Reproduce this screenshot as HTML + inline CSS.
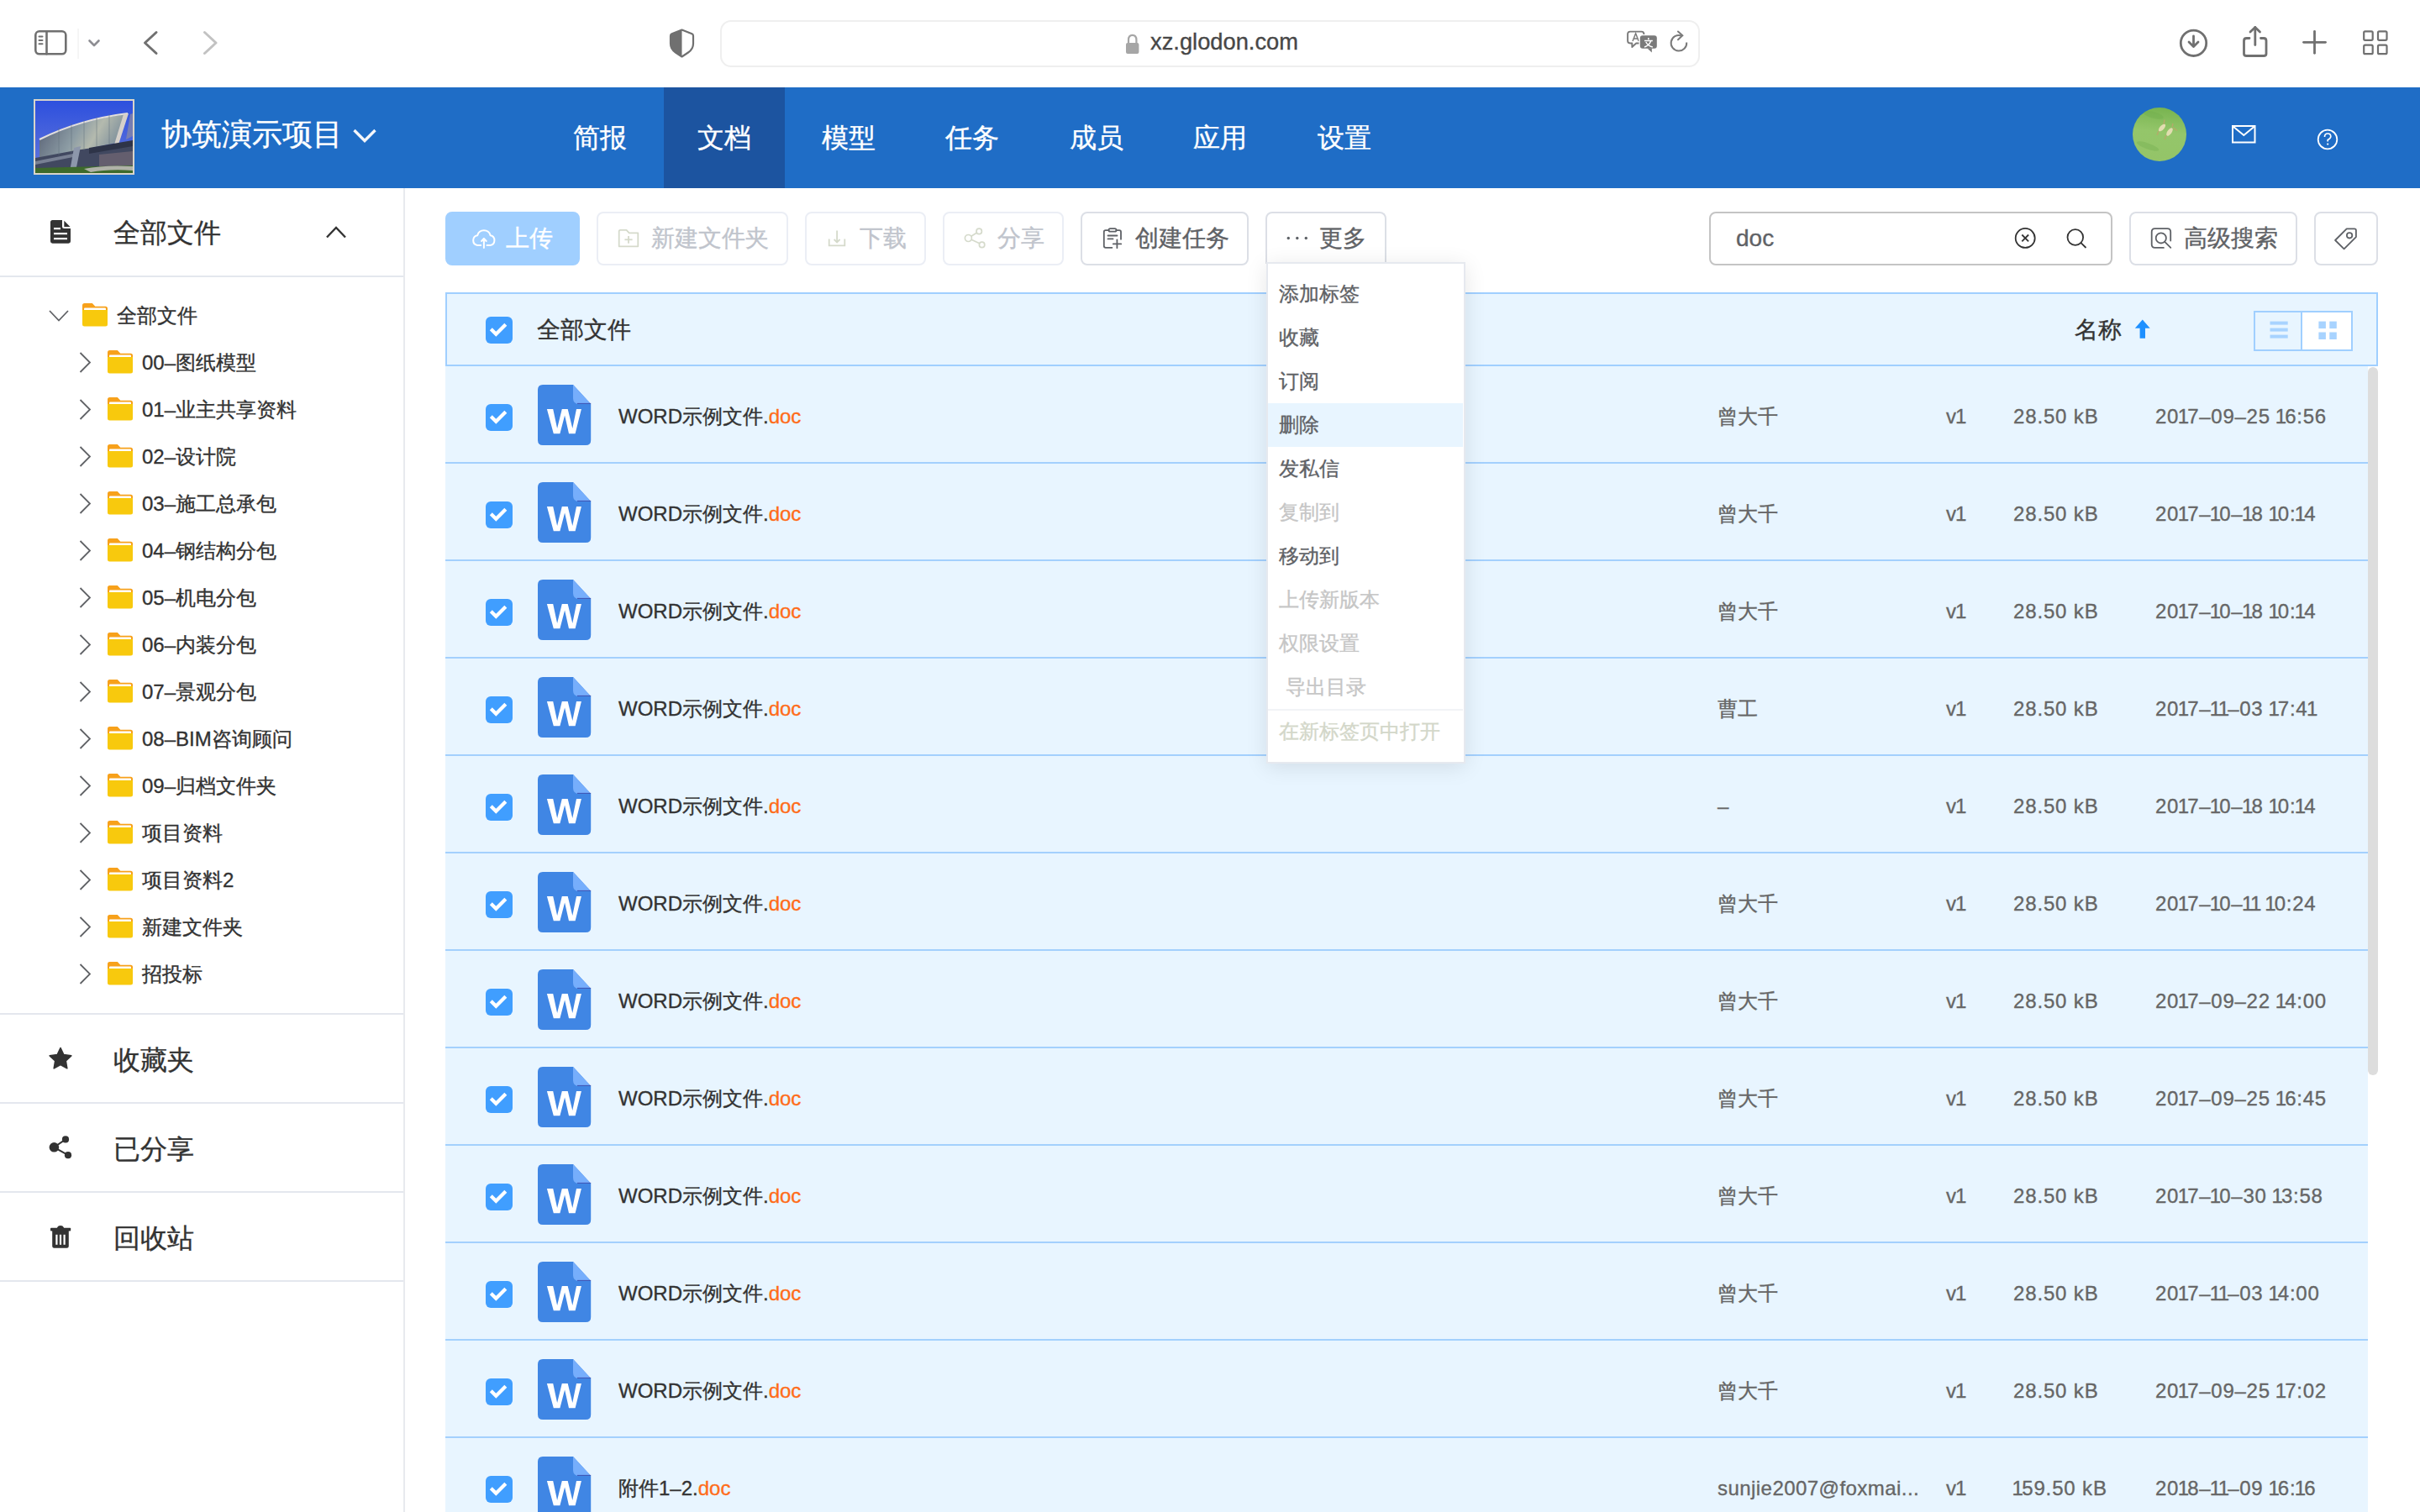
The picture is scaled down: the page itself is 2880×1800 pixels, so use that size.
<!DOCTYPE html>
<html><head><meta charset="utf-8"><style>
*{box-sizing:border-box;margin:0;padding:0}
html,body{width:2880px;height:1800px;overflow:hidden;background:#fff;font-family:"Liberation Sans",sans-serif;}
div{-webkit-text-stroke:0.35px currentColor}
.a{position:absolute}
.t{position:absolute;white-space:nowrap;line-height:1}
svg{position:absolute;overflow:visible}
.nav{position:absolute;top:104px;height:120px;width:144px;color:#fff;font-size:32px;line-height:120px;text-align:center}
.sep{position:absolute;left:0;width:480px;height:2px;background:#e4e7ee}
.tr{position:absolute;font-size:24px;color:#333;line-height:1;white-space:nowrap}
.btn{position:absolute;top:252px;height:64px;border:2px solid #ebeef5;border-radius:8px;background:#fff}
.bt{position:absolute;font-size:28px;line-height:1;white-space:nowrap;color:#c0c4cc}
.row{position:absolute;left:530px;width:2288px;height:116px;background:#e8f5ff;border-bottom:2px solid #a3d0fd}
.nm{position:absolute;left:206px;top:48px;font-size:24px;color:#333;line-height:1;white-space:nowrap}
.nm span{color:#ff6c1a}
.cl{position:absolute;top:48px;font-size:24px;color:#666;line-height:1;white-space:nowrap}
.di{position:absolute;left:14px;font-size:24px;color:#606266;line-height:1;white-space:nowrap}
.ds{color:#c6c6c6}
</style></head><body>
<div class="a" style="left:857px;top:24px;width:1166px;height:56px;border:2px solid #efefef;border-radius:13px;background:#fff"></div>
<div class="t" style="left:1369px;top:35.5px;font-size:27.3px;color:#474747">xz.glodon.com</div>
<svg width="2880" height="104" style="left:0;top:0">
<g fill="none" stroke="#707070" stroke-width="2.6" stroke-linecap="round" stroke-linejoin="round">
<rect x="42.3" y="37.3" width="36" height="27" rx="4.5"/>
<line x1="55.5" y1="37.3" x2="55.5" y2="64.3"/>
<line x1="46.5" y1="43.6" x2="50.5" y2="43.6" stroke-width="2"/>
<line x1="46.5" y1="48" x2="50.5" y2="48" stroke-width="2"/>
<line x1="46.5" y1="52.3" x2="50.5" y2="52.3" stroke-width="2"/>
<polyline points="186,38.5 172.5,51 186,63.5" stroke-width="3"/>
<polyline points="243.5,38.5 257,51 243.5,63.5" stroke="#c2c2c2" stroke-width="3"/>
<polyline points="106.5,48.5 112,54 117.5,48.5" stroke="#8e8e93" stroke-width="2.6"/>
</g>
<line x1="93" y1="34" x2="93" y2="70" stroke="#ececec" stroke-width="1"/>
<!-- shield -->
<path d="M811.5,35.5 L823.5,40.3 Q825,41 825,42.8 V52 Q825,58.5 819,62.5 L811.5,67.5 L804,62.5 Q798,58.5 798,52 V42.8 Q798,41 799.5,40.3 Z" fill="none" stroke="#707070" stroke-width="2.2" stroke-linejoin="round"/>
<path d="M811.5,35.5 L799.5,40.3 Q798,41 798,42.8 V52 Q798,58.5 804,62.5 L811.5,67.5 Z" fill="#707070"/>
<!-- lock -->
<path d="M1343,52 V47.5 Q1343,41.8 1347.7,41.8 Q1352.4,41.8 1352.4,47.5 V52" fill="none" stroke="#a6a6a6" stroke-width="2.2"/>
<rect x="1340" y="51" width="15.4" height="13" rx="2" fill="#a6a6a6"/>
<!-- translate -->
<path d="M1940,37.6 H1953.5 Q1956.4,37.6 1956.4,40.5 V48.6 Q1956.4,51.5 1953.5,51.5 H1947.2 L1942.3,56 V51.5 H1940 Q1937.1,51.5 1937.1,48.6 V40.5 Q1937.1,37.6 1940,37.6 Z" fill="none" stroke="#7a7a7a" stroke-width="1.9" stroke-linejoin="round"/>
<path d="M1943,49 L1946.6,39.8 L1950.2,49 M1944.2,46 H1949" fill="none" stroke="#7a7a7a" stroke-width="1.5"/>
<rect x="1950.5" y="41" width="22.5" height="18" rx="4" fill="#fff"/>
<rect x="1951.8" y="42.2" width="20" height="15.6" rx="3" fill="#7a7a7a"/>
<path d="M1960.5,57.5 L1965.8,62.5 V57.5 Z" fill="#7a7a7a"/>
<path d="M1957,48.6 H1966.8 M1961.8,45 V47.2 M1964.8,48.6 Q1962.5,54.5 1957,56 M1958.8,50 Q1961,54.5 1966.8,56" fill="none" stroke="#fff" stroke-width="1.5"/>
<!-- reload -->
<path d="M2007.2,50.5 A9.3,9.3 0 1 1 2001,42.5" fill="none" stroke="#7a7a7a" stroke-width="2"/>
<polyline points="1997,37.5 2002.3,42.3 1997,47.2" fill="none" stroke="#7a7a7a" stroke-width="2" stroke-linecap="round"/>
<!-- right icons -->
<g fill="none" stroke="#707070" stroke-width="2.8" stroke-linecap="round" stroke-linejoin="round">
<circle cx="2610.5" cy="51.3" r="15.2"/>
<polyline points="2605,50 2610.5,55.5 2616,50"/>
<line x1="2610.5" y1="43" x2="2610.5" y2="55"/>
<path d="M2677,45.5 H2673.5 Q2670.5,45.5 2670.5,48.5 V64 Q2670.5,66.5 2673.5,66.5 H2694 Q2697,66.5 2697,64 V48.5 Q2697,45.5 2694,45.5 H2690.5"/>
<line x1="2683.8" y1="32.5" x2="2683.8" y2="53.5"/>
<polyline points="2678,38 2683.8,32.5 2689.5,38"/>
<line x1="2741.5" y1="50.3" x2="2767.5" y2="50.3"/>
<line x1="2754.5" y1="37.3" x2="2754.5" y2="63.3"/>
<rect x="2813.2" y="37.3" width="10.5" height="10.5" rx="1.5" stroke-width="2.2"/>
<rect x="2830" y="37.3" width="10.5" height="10.5" rx="1.5" stroke-width="2.2"/>
<rect x="2813.2" y="53.7" width="10.5" height="10.5" rx="1.5" stroke-width="2.2"/>
<rect x="2830" y="53.7" width="10.5" height="10.5" rx="1.5" stroke-width="2.2"/>
</g>
</svg>
<div class="a" style="left:0;top:104px;width:2880px;height:120px;background:#1f6dc6"></div>
<div class="a" style="left:790px;top:104px;width:144px;height:120px;background:#1c54a0"></div>
<svg width="2880" height="120" style="left:0;top:104px">
<rect x="40" y="14" width="120" height="90" fill="#d9d5cb"/>
<defs>
<linearGradient id="sky" x1="0" y1="0" x2="0" y2="1"><stop offset="0" stop-color="#2d50de"/><stop offset="1" stop-color="#6678da"/></linearGradient>
<linearGradient id="glass" x1="0" y1="0" x2="1" y2="0.3"><stop offset="0" stop-color="#525a70"/><stop offset="0.5" stop-color="#8c9ca4"/><stop offset="0.72" stop-color="#b4baae"/><stop offset="1" stop-color="#7f909c"/></linearGradient>
<linearGradient id="av" x1="0.5" y1="0" x2="0.4" y2="1"><stop offset="0" stop-color="#78b450"/><stop offset="0.45" stop-color="#94c66a"/><stop offset="1" stop-color="#94c468"/></linearGradient>
</defs>
<rect x="42" y="16" width="116" height="86" fill="url(#sky)"/>
<path d="M47,63 Q95,39 150,32 L139,66 L110,72 L47,86 Z" fill="url(#glass)"/>
<path d="M47,62 Q95,38 152,31" fill="none" stroke="#e4e0da" stroke-width="2.2"/>
<path d="M147,32 L153,31 L141,68 L136,68 Z" fill="#d6d0ca"/>
<path d="M155,32 L158,31 L158,58 L150,62 Z" fill="#8c8aa0" opacity="0.7"/>
<path d="M42,84 L90,75 L110,72 L158,66 L158,98 L42,98 Z" fill="#414860"/>
<path d="M42,88 L92,78 L92,82 L42,92 Z" fill="#9098aa" opacity="0.7"/><g stroke="#5f6f7c" stroke-width="0.8" opacity="0.6"><line x1="70" y1="48" x2="70" y2="81"/><line x1="85" y1="43" x2="85" y2="78"/><line x1="100" y1="39" x2="100" y2="75"/><line x1="115" y1="35" x2="115" y2="72"/><line x1="130" y1="32" x2="130" y2="69"/></g>
<path d="M88,72 L96,70 L90,100 L83,100 Z" fill="#8d97ab"/>
<path d="M106,72 L158,63 L158,70 L106,79 Z" fill="#2e3448"/>
<path d="M118,80 L158,76 L158,96 L118,96 Z" fill="#6d6472" opacity="0.8"/>
<path d="M42,96 L158,93 L158,102 L42,102 Z" fill="#3d6a2b"/>
<path d="M100,97 Q125,92 158,94 L158,99 Q130,97 108,101 Z" fill="#b0b2a8"/>
<polyline points="421.5,51 434,63.5 446.5,51" fill="none" stroke="#f4f6fa" stroke-width="3.4" stroke-linecap="butt"/>
<circle cx="2570" cy="56" r="32" fill="url(#av)"/>
<ellipse cx="2563" cy="33" rx="12" ry="4" fill="#6aa84a" opacity="0.3" transform="rotate(15 2563 33)"/><ellipse cx="2556" cy="70" rx="14" ry="3.5" fill="#6aa84a" opacity="0.3" transform="rotate(20 2556 70)"/><ellipse cx="2573" cy="48" rx="5.5" ry="2.6" fill="#e2ddb0" transform="rotate(-48 2573 48)"/><ellipse cx="2582" cy="53" rx="5.5" ry="2.6" fill="#e2ddb0" transform="rotate(-55 2582 53)"/><path d="M2575,44 L2576,38.5 M2585,47 L2586,43 M2586,48 L2591,51.5 M2569,52 L2567,57 M2578,57 L2576,62" stroke="#b8a86a" stroke-width="1.3" fill="none"/>
<rect x="2657" y="46" width="26.5" height="19.5" fill="none" stroke="#fff" stroke-width="2"/>
<polyline points="2657.5,46.5 2670.3,57 2683,46.5" fill="none" stroke="#fff" stroke-width="2"/>
<circle cx="2770" cy="62" r="11.3" fill="none" stroke="#fff" stroke-width="1.8"/>
<path d="M2766.5,59 Q2766.5,55 2770.2,55 Q2773.8,55 2773.8,58.5 Q2773.8,60.8 2770.2,62.5 V64.5" fill="none" stroke="#fff" stroke-width="1.7"/>
<circle cx="2770.2" cy="67.6" r="1.1" fill="#fff"/>
</svg>
<div class="t" style="left:192px;top:142px;font-size:36px;color:#fff">协筑演示项目</div>
<div class="nav" style="left:642px">简报</div>
<div class="nav" style="left:790px">文档</div>
<div class="nav" style="left:938px">模型</div>
<div class="nav" style="left:1085px">任务</div>
<div class="nav" style="left:1233px">成员</div>
<div class="nav" style="left:1380px">应用</div>
<div class="nav" style="left:1528px">设置</div>
<div class="a" style="left:480px;top:224px;width:2px;height:1576px;background:#e8eaee"></div>
<div class="t" style="left:135px;top:261px;font-size:32px;color:#333">全部文件</div>
<div class="sep" style="top:328px"></div>
<div class="sep" style="top:1206px"></div>
<div class="sep" style="top:1312px"></div>
<div class="sep" style="top:1418px"></div>
<div class="sep" style="top:1524px"></div>
<svg width="480" height="1576" style="left:0;top:224px"><g transform="translate(0,-224)"><path d="M62.5,262 H74 V269.5 Q74,272 76.5,272 H84 V287.3 Q84,289.7 81.5,289.7 H62.5 Q60,289.7 60,287.3 V264.5 Q60,262 62.5,262 Z" fill="#333"/><path d="M76.3,262.8 L83.5,270 H76.3 Z" fill="#333"/><rect x="64" y="271" width="8" height="2.2" fill="#fff"/><rect x="64" y="277" width="16" height="2.2" fill="#fff"/><rect x="64" y="283" width="16" height="2.2" fill="#fff"/><polyline points="389,282.5 400,271 411,282.5" fill="none" stroke="#333" stroke-width="2.4"/><polyline points="59,370 70,381.5 81,370" fill="none" stroke="#606266" stroke-width="1.8"/><g transform="translate(98,361)"><path d="M0,2.5 Q0,0 2.5,0 H11.8 L15.3,3.8 H27.5 Q30,3.8 30,6.3 V12 H0 Z" fill="#f7a11b"/><rect x="2" y="5.6" width="26" height="3" rx="1" fill="#fff"/><path d="M0,8 H30 V25 Q30,27.5 27.5,27.5 H2.5 Q0,27.5 0,25 Z" fill="#f8c90d"/></g></g><g transform="translate(0,-224)"><polyline points="95.5,420 107,431.5 95.5,443" fill="none" stroke="#606266" stroke-width="1.8"/><g transform="translate(128,417)"><path d="M0,2.5 Q0,0 2.5,0 H11.8 L15.3,3.8 H27.5 Q30,3.8 30,6.3 V12 H0 Z" fill="#f7a11b"/><rect x="2" y="5.6" width="26" height="3" rx="1" fill="#fff"/><path d="M0,8 H30 V25 Q30,27.5 27.5,27.5 H2.5 Q0,27.5 0,25 Z" fill="#f8c90d"/></g></g><g transform="translate(0,-224)"><polyline points="95.5,476 107,487.5 95.5,499" fill="none" stroke="#606266" stroke-width="1.8"/><g transform="translate(128,473)"><path d="M0,2.5 Q0,0 2.5,0 H11.8 L15.3,3.8 H27.5 Q30,3.8 30,6.3 V12 H0 Z" fill="#f7a11b"/><rect x="2" y="5.6" width="26" height="3" rx="1" fill="#fff"/><path d="M0,8 H30 V25 Q30,27.5 27.5,27.5 H2.5 Q0,27.5 0,25 Z" fill="#f8c90d"/></g></g><g transform="translate(0,-224)"><polyline points="95.5,532 107,543.5 95.5,555" fill="none" stroke="#606266" stroke-width="1.8"/><g transform="translate(128,529)"><path d="M0,2.5 Q0,0 2.5,0 H11.8 L15.3,3.8 H27.5 Q30,3.8 30,6.3 V12 H0 Z" fill="#f7a11b"/><rect x="2" y="5.6" width="26" height="3" rx="1" fill="#fff"/><path d="M0,8 H30 V25 Q30,27.5 27.5,27.5 H2.5 Q0,27.5 0,25 Z" fill="#f8c90d"/></g></g><g transform="translate(0,-224)"><polyline points="95.5,588 107,599.5 95.5,611" fill="none" stroke="#606266" stroke-width="1.8"/><g transform="translate(128,585)"><path d="M0,2.5 Q0,0 2.5,0 H11.8 L15.3,3.8 H27.5 Q30,3.8 30,6.3 V12 H0 Z" fill="#f7a11b"/><rect x="2" y="5.6" width="26" height="3" rx="1" fill="#fff"/><path d="M0,8 H30 V25 Q30,27.5 27.5,27.5 H2.5 Q0,27.5 0,25 Z" fill="#f8c90d"/></g></g><g transform="translate(0,-224)"><polyline points="95.5,644 107,655.5 95.5,667" fill="none" stroke="#606266" stroke-width="1.8"/><g transform="translate(128,641)"><path d="M0,2.5 Q0,0 2.5,0 H11.8 L15.3,3.8 H27.5 Q30,3.8 30,6.3 V12 H0 Z" fill="#f7a11b"/><rect x="2" y="5.6" width="26" height="3" rx="1" fill="#fff"/><path d="M0,8 H30 V25 Q30,27.5 27.5,27.5 H2.5 Q0,27.5 0,25 Z" fill="#f8c90d"/></g></g><g transform="translate(0,-224)"><polyline points="95.5,700 107,711.5 95.5,723" fill="none" stroke="#606266" stroke-width="1.8"/><g transform="translate(128,697)"><path d="M0,2.5 Q0,0 2.5,0 H11.8 L15.3,3.8 H27.5 Q30,3.8 30,6.3 V12 H0 Z" fill="#f7a11b"/><rect x="2" y="5.6" width="26" height="3" rx="1" fill="#fff"/><path d="M0,8 H30 V25 Q30,27.5 27.5,27.5 H2.5 Q0,27.5 0,25 Z" fill="#f8c90d"/></g></g><g transform="translate(0,-224)"><polyline points="95.5,756 107,767.5 95.5,779" fill="none" stroke="#606266" stroke-width="1.8"/><g transform="translate(128,753)"><path d="M0,2.5 Q0,0 2.5,0 H11.8 L15.3,3.8 H27.5 Q30,3.8 30,6.3 V12 H0 Z" fill="#f7a11b"/><rect x="2" y="5.6" width="26" height="3" rx="1" fill="#fff"/><path d="M0,8 H30 V25 Q30,27.5 27.5,27.5 H2.5 Q0,27.5 0,25 Z" fill="#f8c90d"/></g></g><g transform="translate(0,-224)"><polyline points="95.5,812 107,823.5 95.5,835" fill="none" stroke="#606266" stroke-width="1.8"/><g transform="translate(128,809)"><path d="M0,2.5 Q0,0 2.5,0 H11.8 L15.3,3.8 H27.5 Q30,3.8 30,6.3 V12 H0 Z" fill="#f7a11b"/><rect x="2" y="5.6" width="26" height="3" rx="1" fill="#fff"/><path d="M0,8 H30 V25 Q30,27.5 27.5,27.5 H2.5 Q0,27.5 0,25 Z" fill="#f8c90d"/></g></g><g transform="translate(0,-224)"><polyline points="95.5,868 107,879.5 95.5,891" fill="none" stroke="#606266" stroke-width="1.8"/><g transform="translate(128,865)"><path d="M0,2.5 Q0,0 2.5,0 H11.8 L15.3,3.8 H27.5 Q30,3.8 30,6.3 V12 H0 Z" fill="#f7a11b"/><rect x="2" y="5.6" width="26" height="3" rx="1" fill="#fff"/><path d="M0,8 H30 V25 Q30,27.5 27.5,27.5 H2.5 Q0,27.5 0,25 Z" fill="#f8c90d"/></g></g><g transform="translate(0,-224)"><polyline points="95.5,924 107,935.5 95.5,947" fill="none" stroke="#606266" stroke-width="1.8"/><g transform="translate(128,921)"><path d="M0,2.5 Q0,0 2.5,0 H11.8 L15.3,3.8 H27.5 Q30,3.8 30,6.3 V12 H0 Z" fill="#f7a11b"/><rect x="2" y="5.6" width="26" height="3" rx="1" fill="#fff"/><path d="M0,8 H30 V25 Q30,27.5 27.5,27.5 H2.5 Q0,27.5 0,25 Z" fill="#f8c90d"/></g></g><g transform="translate(0,-224)"><polyline points="95.5,980 107,991.5 95.5,1003" fill="none" stroke="#606266" stroke-width="1.8"/><g transform="translate(128,977)"><path d="M0,2.5 Q0,0 2.5,0 H11.8 L15.3,3.8 H27.5 Q30,3.8 30,6.3 V12 H0 Z" fill="#f7a11b"/><rect x="2" y="5.6" width="26" height="3" rx="1" fill="#fff"/><path d="M0,8 H30 V25 Q30,27.5 27.5,27.5 H2.5 Q0,27.5 0,25 Z" fill="#f8c90d"/></g></g><g transform="translate(0,-224)"><polyline points="95.5,1036 107,1047.5 95.5,1059" fill="none" stroke="#606266" stroke-width="1.8"/><g transform="translate(128,1033)"><path d="M0,2.5 Q0,0 2.5,0 H11.8 L15.3,3.8 H27.5 Q30,3.8 30,6.3 V12 H0 Z" fill="#f7a11b"/><rect x="2" y="5.6" width="26" height="3" rx="1" fill="#fff"/><path d="M0,8 H30 V25 Q30,27.5 27.5,27.5 H2.5 Q0,27.5 0,25 Z" fill="#f8c90d"/></g></g><g transform="translate(0,-224)"><polyline points="95.5,1092 107,1103.5 95.5,1115" fill="none" stroke="#606266" stroke-width="1.8"/><g transform="translate(128,1089)"><path d="M0,2.5 Q0,0 2.5,0 H11.8 L15.3,3.8 H27.5 Q30,3.8 30,6.3 V12 H0 Z" fill="#f7a11b"/><rect x="2" y="5.6" width="26" height="3" rx="1" fill="#fff"/><path d="M0,8 H30 V25 Q30,27.5 27.5,27.5 H2.5 Q0,27.5 0,25 Z" fill="#f8c90d"/></g></g><g transform="translate(0,-224)"><polyline points="95.5,1148 107,1159.5 95.5,1171" fill="none" stroke="#606266" stroke-width="1.8"/><g transform="translate(128,1145)"><path d="M0,2.5 Q0,0 2.5,0 H11.8 L15.3,3.8 H27.5 Q30,3.8 30,6.3 V12 H0 Z" fill="#f7a11b"/><rect x="2" y="5.6" width="26" height="3" rx="1" fill="#fff"/><path d="M0,8 H30 V25 Q30,27.5 27.5,27.5 H2.5 Q0,27.5 0,25 Z" fill="#f8c90d"/></g></g><g transform="translate(0,-224)"><path d="M72,1247.5 L75.8,1255.5 L84.8,1256.8 L78.3,1263 L79.8,1271.8 L72,1267.6 L64.2,1271.8 L65.7,1263 L59.2,1256.8 L68.2,1255.5 Z" fill="#333" stroke="#333" stroke-width="1.6" stroke-linejoin="round"/><line x1="64.4" y1="1365.8" x2="78" y2="1356.4" stroke="#333" stroke-width="2"/><line x1="64.4" y1="1365.8" x2="81" y2="1375.2" stroke="#333" stroke-width="2"/><circle cx="64.4" cy="1365.8" r="5.8" fill="#333"/><circle cx="78" cy="1356.4" r="4.1" fill="#333"/><circle cx="81" cy="1375.2" r="4.1" fill="#333"/><path d="M67.8,1462.3 A4.3,4.3 0 0 1 76.2,1462.3 Z" fill="#333"/><rect x="60" y="1461.8" width="24.2" height="3.8" rx="0.8" fill="#333"/><path d="M62.2,1465 H81.8 V1483.5 Q81.8,1485.7 79.6,1485.7 H64.4 Q62.2,1485.7 62.2,1483.5 Z" fill="#333"/><rect x="66.3" y="1469.8" width="2.2" height="12" fill="#fff"/><rect x="70.9" y="1469.8" width="2.2" height="12" fill="#fff"/><rect x="75.5" y="1469.8" width="2.2" height="12" fill="#fff"/></g></svg>
<div class="tr" style="left:139px;top:364px">全部文件</div>
<div class="tr" style="left:169px;top:420px">00–图纸模型</div>
<div class="tr" style="left:169px;top:476px">01–业主共享资料</div>
<div class="tr" style="left:169px;top:532px">02–设计院</div>
<div class="tr" style="left:169px;top:588px">03–施工总承包</div>
<div class="tr" style="left:169px;top:644px">04–钢结构分包</div>
<div class="tr" style="left:169px;top:700px">05–机电分包</div>
<div class="tr" style="left:169px;top:756px">06–内装分包</div>
<div class="tr" style="left:169px;top:812px">07–景观分包</div>
<div class="tr" style="left:169px;top:868px">08–BIM咨询顾问</div>
<div class="tr" style="left:169px;top:924px">09–归档文件夹</div>
<div class="tr" style="left:169px;top:980px">项目资料</div>
<div class="tr" style="left:169px;top:1036px">项目资料2</div>
<div class="tr" style="left:169px;top:1092px">新建文件夹</div>
<div class="tr" style="left:169px;top:1148px">招投标</div>
<div class="t" style="left:135px;top:1246px;font-size:32px;color:#333">收藏夹</div>
<div class="t" style="left:135px;top:1352px;font-size:32px;color:#333">已分享</div>
<div class="t" style="left:135px;top:1458px;font-size:32px;color:#333">回收站</div>
<div class="btn" style="left:530px;width:160px;background:#a0cfff;border-color:#a0cfff"></div>
<div class="btn" style="left:710px;width:228px"></div>
<div class="btn" style="left:958px;width:144px"></div>
<div class="btn" style="left:1122px;width:144px"></div>
<div class="btn" style="left:1286px;width:200px;border-color:#dcdfe6"></div>
<div class="btn" style="left:1506px;width:144px;height:62px;border-color:#dcdfe6;border-bottom:none;border-radius:8px 8px 0 0"></div>
<div class="btn" style="left:2034px;width:480px;border-color:#c4c4c4"></div>
<div class="btn" style="left:2534px;width:200px;border-color:#dcdfe6"></div>
<div class="btn" style="left:2754px;width:76px;border-color:#dcdfe6"></div>
<svg width="2880" height="60" style="left:0;top:250px">
<g transform="translate(555,15)" fill="none" stroke="#fff" stroke-width="2" stroke-linecap="round" stroke-linejoin="round">
<path d="M17.2,27 H13 A6,6 0 0 1 13.2,15.2 A8,8 0 0 1 28.6,15.2 A6,6 0 0 1 28.4,27 H24.5"/>
<line x1="20.9" y1="19.5" x2="20.9" y2="30"/><polyline points="18.1,22 20.9,19 23.7,22"/>
</g>
<g transform="translate(730,15)" fill="none" stroke="#d5dacb" stroke-width="1.8" stroke-linejoin="round">
<path d="M8.2,8.9 H15.5 L18.8,12.4 H29.3 V28.3 H6.7 V10.4 Q6.7,8.9 8.2,8.9 Z"/>
<line x1="13.4" y1="20.3" x2="22.6" y2="20.3"/><line x1="18" y1="15.9" x2="18" y2="24.7"/>
</g>
<g transform="translate(978,15)" fill="none" stroke="#d5dacb" stroke-width="1.8">
<line x1="18.1" y1="9.5" x2="18.1" y2="23.5"/><polyline points="14.6,20 18.1,23.5 21.6,20"/>
<polyline points="8.7,19.5 8.7,27.3 27.3,27.3 27.3,19.5"/>
</g>
<g transform="translate(1140,15)" fill="none" stroke="#d5dacb" stroke-width="1.7">
<circle cx="12.4" cy="18.5" r="4"/><circle cx="25.2" cy="10.4" r="3.2"/><circle cx="28.6" cy="26.4" r="3.2"/>
<line x1="15.8" y1="16.2" x2="22.6" y2="12"/><line x1="16.1" y1="20.2" x2="25.6" y2="24.8"/>
</g>
<g transform="translate(1305,15)" fill="none" stroke="#5e6166" stroke-width="1.8" stroke-linecap="round">
<path d="M18.4,29.8 H10.8 Q8.8,29.8 8.8,27.8 V11 Q8.8,9.1 10.8,9.1 H14.5 M23.5,9.1 H27 Q29,9.1 29,11 V19.8"/>
<rect x="14.5" y="7.2" width="9" height="3.4" rx="1.7"/>
<line x1="13.5" y1="15.5" x2="24.5" y2="15.5"/><line x1="13.5" y1="19.4" x2="19.5" y2="19.4"/>
<line x1="19.8" y1="25.4" x2="29.2" y2="25.4"/><line x1="24.4" y1="20.5" x2="24.4" y2="30.2"/>
</g>
<g fill="#5e6166"><circle cx="1533.3" cy="33.5" r="1.7"/><circle cx="1543.8" cy="33.5" r="1.7"/><circle cx="1554.3" cy="33.5" r="1.7"/></g>
<g transform="translate(2385,0)" fill="none" stroke="#333" stroke-width="1.8">
<circle cx="25.2" cy="33.4" r="11.5"/><line x1="21.3" y1="29.5" x2="29.1" y2="37.3"/><line x1="29.1" y1="29.5" x2="21.3" y2="37.3"/>
</g>
<g fill="none" stroke="#333" stroke-width="1.8" stroke-linecap="round">
<circle cx="2469.8" cy="32.5" r="9.3"/><line x1="2476.5" y1="39.2" x2="2482" y2="44.5"/>
</g>
<g transform="translate(2550,12)" fill="none" stroke="#5e6166" stroke-width="1.8" stroke-linecap="round">
<path d="M24.9,32.9 H14.5 Q10.7,32.9 10.7,29 V14 Q10.7,10.1 14.5,10.1 H29.4 Q33.2,10.1 33.2,14 V24.6"/>
<circle cx="21.8" cy="21.4" r="6.1"/><line x1="26.2" y1="25.8" x2="33.3" y2="32.8"/>
</g>
<g transform="translate(2770,12)" fill="none" stroke="#5e6166" stroke-width="1.8" stroke-linejoin="round">
<path d="M22.7,10.3 H32 Q33.9,10.3 33.9,12.2 V20.1 L19.6,34.4 L9.1,24 Z"/>
<circle cx="26.1" cy="18.3" r="3.2"/>
</g>
</svg>
<div class="t" style="left:602px;top:270px;font-size:28px;color:#fff">上传</div>
<div class="t" style="left:775px;top:270px;font-size:28px;color:#c0c4cc">新建文件夹</div>
<div class="t" style="left:1023px;top:270px;font-size:28px;color:#c0c4cc">下载</div>
<div class="t" style="left:1187px;top:270px;font-size:28px;color:#c0c4cc">分享</div>
<div class="t" style="left:1351px;top:270px;font-size:28px;color:#606266">创建任务</div>
<div class="t" style="left:1570px;top:270px;font-size:28px;color:#606266">更多</div>
<div class="t" style="left:2599px;top:270px;font-size:28px;color:#606266">高级搜索</div>
<div class="t" style="left:2066px;top:270px;font-size:28px;color:#606266">doc</div>
<div class="a" style="left:530px;top:348px;width:2300px;height:88px;border:2px solid #a0cfff;background:#e8f5ff"></div>
<div class="a" style="left:2682px;top:370px;width:118px;height:48px;border:2px solid #a0cfff;background:#fff"></div>
<div class="a" style="left:2684px;top:372px;width:56px;height:44px;background:#e8f5ff;border-right:2px solid #a0cfff"></div>
<div class="t" style="left:639px;top:378.5px;font-size:28px;color:#333">全部文件</div>
<div class="t" style="left:2469px;top:378.5px;font-size:28px;color:#333">名称</div>
<svg width="2880" height="88" style="left:0;top:348px">
<rect x="578" y="29" width="32" height="32" rx="6" fill="#409eff"/>
<polyline points="584.3,43.8 590.3,49.8 601.8,38.2" fill="none" stroke="#fff" stroke-width="4.2"/>
<path d="M2549.8,32.6 L2558.7,42.8 H2553 V54.8 H2546.6 V42.8 H2540.8 Z" fill="#1e90ff"/>
<g fill="#a8d3ff"><rect x="2701.5" y="34.6" width="21.2" height="4"/><rect x="2701.5" y="42.6" width="21.2" height="4"/><rect x="2701.5" y="50.6" width="21.2" height="4"/>
<rect x="2759.4" y="34.6" width="8.5" height="8.5"/><rect x="2772.3" y="34.6" width="8.5" height="8.5"/><rect x="2759.4" y="47.5" width="8.5" height="8.5"/><rect x="2772.3" y="47.5" width="8.5" height="8.5"/></g>
</svg>
<div class="row" style="top:436px"><svg width="32" height="32" style="left:48px;top:45px"><rect width="32" height="32" rx="6" fill="#409eff"/><polyline points="6.3,14.8 12.3,20.8 23.8,9.2" fill="none" stroke="#fff" stroke-width="4.2"/></svg><svg width="64" height="72" style="left:110px;top:22px"><path d="M6,0 H42 L63.2,23 V66 Q63.2,72 57.2,72 H6 Q0,72 0,66 V6 Q0,0 6,0 Z" fill="#4086e4"/><path d="M42,0 L63.2,23 H49 Q42,23 42,16 Z" fill="#76aefc"/><path d="M47,22.4 H63.2" stroke="#3a4fb0" stroke-width="1" /><path d="M10.9,29.1 H18.2 L23.1,51.9 L28.8,29.1 H35.7 L41.3,51.9 L46,29.1 H51.9 L44.6,58.2 H37 L32.1,36.4 L26.4,58.2 H18.8 Z" fill="#fff"/></svg><div class="nm">WORD示例文件.<span>doc</span></div><div class="cl" style="left:1514px;letter-spacing:0px">曾大千</div><div class="cl" style="left:1786px"><span style="letter-spacing:-1px">v1</span></div><div class="cl" style="left:1866px;letter-spacing:0.85px">28.50 kB</div><div class="cl" style="left:2035px;letter-spacing:0.75px">20<span style="margin-left:-1.51px;margin-right:-2.69px">1</span>7–09–25 <span style="margin-left:-1.51px;margin-right:-2.69px">1</span>6:56</div></div>
<div class="row" style="top:552px"><svg width="32" height="32" style="left:48px;top:45px"><rect width="32" height="32" rx="6" fill="#409eff"/><polyline points="6.3,14.8 12.3,20.8 23.8,9.2" fill="none" stroke="#fff" stroke-width="4.2"/></svg><svg width="64" height="72" style="left:110px;top:22px"><path d="M6,0 H42 L63.2,23 V66 Q63.2,72 57.2,72 H6 Q0,72 0,66 V6 Q0,0 6,0 Z" fill="#4086e4"/><path d="M42,0 L63.2,23 H49 Q42,23 42,16 Z" fill="#76aefc"/><path d="M47,22.4 H63.2" stroke="#3a4fb0" stroke-width="1" /><path d="M10.9,29.1 H18.2 L23.1,51.9 L28.8,29.1 H35.7 L41.3,51.9 L46,29.1 H51.9 L44.6,58.2 H37 L32.1,36.4 L26.4,58.2 H18.8 Z" fill="#fff"/></svg><div class="nm">WORD示例文件.<span>doc</span></div><div class="cl" style="left:1514px;letter-spacing:0px">曾大千</div><div class="cl" style="left:1786px"><span style="letter-spacing:-1px">v1</span></div><div class="cl" style="left:1866px;letter-spacing:0.85px">28.50 kB</div><div class="cl" style="left:2035px;letter-spacing:0.75px">20<span style="margin-left:-1.51px;margin-right:-2.69px">1</span>7–<span style="margin-left:-1.51px;margin-right:-2.69px">1</span>0–<span style="margin-left:-1.51px;margin-right:-2.69px">1</span>8 <span style="margin-left:-1.51px;margin-right:-2.69px">1</span>0:<span style="margin-left:-1.51px;margin-right:-2.69px">1</span>4</div></div>
<div class="row" style="top:668px"><svg width="32" height="32" style="left:48px;top:45px"><rect width="32" height="32" rx="6" fill="#409eff"/><polyline points="6.3,14.8 12.3,20.8 23.8,9.2" fill="none" stroke="#fff" stroke-width="4.2"/></svg><svg width="64" height="72" style="left:110px;top:22px"><path d="M6,0 H42 L63.2,23 V66 Q63.2,72 57.2,72 H6 Q0,72 0,66 V6 Q0,0 6,0 Z" fill="#4086e4"/><path d="M42,0 L63.2,23 H49 Q42,23 42,16 Z" fill="#76aefc"/><path d="M47,22.4 H63.2" stroke="#3a4fb0" stroke-width="1" /><path d="M10.9,29.1 H18.2 L23.1,51.9 L28.8,29.1 H35.7 L41.3,51.9 L46,29.1 H51.9 L44.6,58.2 H37 L32.1,36.4 L26.4,58.2 H18.8 Z" fill="#fff"/></svg><div class="nm">WORD示例文件.<span>doc</span></div><div class="cl" style="left:1514px;letter-spacing:0px">曾大千</div><div class="cl" style="left:1786px"><span style="letter-spacing:-1px">v1</span></div><div class="cl" style="left:1866px;letter-spacing:0.85px">28.50 kB</div><div class="cl" style="left:2035px;letter-spacing:0.75px">20<span style="margin-left:-1.51px;margin-right:-2.69px">1</span>7–<span style="margin-left:-1.51px;margin-right:-2.69px">1</span>0–<span style="margin-left:-1.51px;margin-right:-2.69px">1</span>8 <span style="margin-left:-1.51px;margin-right:-2.69px">1</span>0:<span style="margin-left:-1.51px;margin-right:-2.69px">1</span>4</div></div>
<div class="row" style="top:784px"><svg width="32" height="32" style="left:48px;top:45px"><rect width="32" height="32" rx="6" fill="#409eff"/><polyline points="6.3,14.8 12.3,20.8 23.8,9.2" fill="none" stroke="#fff" stroke-width="4.2"/></svg><svg width="64" height="72" style="left:110px;top:22px"><path d="M6,0 H42 L63.2,23 V66 Q63.2,72 57.2,72 H6 Q0,72 0,66 V6 Q0,0 6,0 Z" fill="#4086e4"/><path d="M42,0 L63.2,23 H49 Q42,23 42,16 Z" fill="#76aefc"/><path d="M47,22.4 H63.2" stroke="#3a4fb0" stroke-width="1" /><path d="M10.9,29.1 H18.2 L23.1,51.9 L28.8,29.1 H35.7 L41.3,51.9 L46,29.1 H51.9 L44.6,58.2 H37 L32.1,36.4 L26.4,58.2 H18.8 Z" fill="#fff"/></svg><div class="nm">WORD示例文件.<span>doc</span></div><div class="cl" style="left:1514px;letter-spacing:0px">曹工</div><div class="cl" style="left:1786px"><span style="letter-spacing:-1px">v1</span></div><div class="cl" style="left:1866px;letter-spacing:0.85px">28.50 kB</div><div class="cl" style="left:2035px;letter-spacing:0.75px">20<span style="margin-left:-1.51px;margin-right:-2.69px">1</span>7–<span style="margin-left:-1.51px;margin-right:-2.69px">1</span><span style="margin-left:-1.51px;margin-right:-2.69px">1</span>–03 <span style="margin-left:-1.51px;margin-right:-2.69px">1</span>7:4<span style="margin-left:-1.51px;margin-right:-2.69px">1</span></div></div>
<div class="row" style="top:900px"><svg width="32" height="32" style="left:48px;top:45px"><rect width="32" height="32" rx="6" fill="#409eff"/><polyline points="6.3,14.8 12.3,20.8 23.8,9.2" fill="none" stroke="#fff" stroke-width="4.2"/></svg><svg width="64" height="72" style="left:110px;top:22px"><path d="M6,0 H42 L63.2,23 V66 Q63.2,72 57.2,72 H6 Q0,72 0,66 V6 Q0,0 6,0 Z" fill="#4086e4"/><path d="M42,0 L63.2,23 H49 Q42,23 42,16 Z" fill="#76aefc"/><path d="M47,22.4 H63.2" stroke="#3a4fb0" stroke-width="1" /><path d="M10.9,29.1 H18.2 L23.1,51.9 L28.8,29.1 H35.7 L41.3,51.9 L46,29.1 H51.9 L44.6,58.2 H37 L32.1,36.4 L26.4,58.2 H18.8 Z" fill="#fff"/></svg><div class="nm">WORD示例文件.<span>doc</span></div><div class="cl" style="left:1514px;letter-spacing:0px">–</div><div class="cl" style="left:1786px"><span style="letter-spacing:-1px">v1</span></div><div class="cl" style="left:1866px;letter-spacing:0.85px">28.50 kB</div><div class="cl" style="left:2035px;letter-spacing:0.75px">20<span style="margin-left:-1.51px;margin-right:-2.69px">1</span>7–<span style="margin-left:-1.51px;margin-right:-2.69px">1</span>0–<span style="margin-left:-1.51px;margin-right:-2.69px">1</span>8 <span style="margin-left:-1.51px;margin-right:-2.69px">1</span>0:<span style="margin-left:-1.51px;margin-right:-2.69px">1</span>4</div></div>
<div class="row" style="top:1016px"><svg width="32" height="32" style="left:48px;top:45px"><rect width="32" height="32" rx="6" fill="#409eff"/><polyline points="6.3,14.8 12.3,20.8 23.8,9.2" fill="none" stroke="#fff" stroke-width="4.2"/></svg><svg width="64" height="72" style="left:110px;top:22px"><path d="M6,0 H42 L63.2,23 V66 Q63.2,72 57.2,72 H6 Q0,72 0,66 V6 Q0,0 6,0 Z" fill="#4086e4"/><path d="M42,0 L63.2,23 H49 Q42,23 42,16 Z" fill="#76aefc"/><path d="M47,22.4 H63.2" stroke="#3a4fb0" stroke-width="1" /><path d="M10.9,29.1 H18.2 L23.1,51.9 L28.8,29.1 H35.7 L41.3,51.9 L46,29.1 H51.9 L44.6,58.2 H37 L32.1,36.4 L26.4,58.2 H18.8 Z" fill="#fff"/></svg><div class="nm">WORD示例文件.<span>doc</span></div><div class="cl" style="left:1514px;letter-spacing:0px">曾大千</div><div class="cl" style="left:1786px"><span style="letter-spacing:-1px">v1</span></div><div class="cl" style="left:1866px;letter-spacing:0.85px">28.50 kB</div><div class="cl" style="left:2035px;letter-spacing:0.75px">20<span style="margin-left:-1.51px;margin-right:-2.69px">1</span>7–<span style="margin-left:-1.51px;margin-right:-2.69px">1</span>0–<span style="margin-left:-1.51px;margin-right:-2.69px">1</span><span style="margin-left:-1.51px;margin-right:-2.69px">1</span> <span style="margin-left:-1.51px;margin-right:-2.69px">1</span>0:24</div></div>
<div class="row" style="top:1132px"><svg width="32" height="32" style="left:48px;top:45px"><rect width="32" height="32" rx="6" fill="#409eff"/><polyline points="6.3,14.8 12.3,20.8 23.8,9.2" fill="none" stroke="#fff" stroke-width="4.2"/></svg><svg width="64" height="72" style="left:110px;top:22px"><path d="M6,0 H42 L63.2,23 V66 Q63.2,72 57.2,72 H6 Q0,72 0,66 V6 Q0,0 6,0 Z" fill="#4086e4"/><path d="M42,0 L63.2,23 H49 Q42,23 42,16 Z" fill="#76aefc"/><path d="M47,22.4 H63.2" stroke="#3a4fb0" stroke-width="1" /><path d="M10.9,29.1 H18.2 L23.1,51.9 L28.8,29.1 H35.7 L41.3,51.9 L46,29.1 H51.9 L44.6,58.2 H37 L32.1,36.4 L26.4,58.2 H18.8 Z" fill="#fff"/></svg><div class="nm">WORD示例文件.<span>doc</span></div><div class="cl" style="left:1514px;letter-spacing:0px">曾大千</div><div class="cl" style="left:1786px"><span style="letter-spacing:-1px">v1</span></div><div class="cl" style="left:1866px;letter-spacing:0.85px">28.50 kB</div><div class="cl" style="left:2035px;letter-spacing:0.75px">20<span style="margin-left:-1.51px;margin-right:-2.69px">1</span>7–09–22 <span style="margin-left:-1.51px;margin-right:-2.69px">1</span>4:00</div></div>
<div class="row" style="top:1248px"><svg width="32" height="32" style="left:48px;top:45px"><rect width="32" height="32" rx="6" fill="#409eff"/><polyline points="6.3,14.8 12.3,20.8 23.8,9.2" fill="none" stroke="#fff" stroke-width="4.2"/></svg><svg width="64" height="72" style="left:110px;top:22px"><path d="M6,0 H42 L63.2,23 V66 Q63.2,72 57.2,72 H6 Q0,72 0,66 V6 Q0,0 6,0 Z" fill="#4086e4"/><path d="M42,0 L63.2,23 H49 Q42,23 42,16 Z" fill="#76aefc"/><path d="M47,22.4 H63.2" stroke="#3a4fb0" stroke-width="1" /><path d="M10.9,29.1 H18.2 L23.1,51.9 L28.8,29.1 H35.7 L41.3,51.9 L46,29.1 H51.9 L44.6,58.2 H37 L32.1,36.4 L26.4,58.2 H18.8 Z" fill="#fff"/></svg><div class="nm">WORD示例文件.<span>doc</span></div><div class="cl" style="left:1514px;letter-spacing:0px">曾大千</div><div class="cl" style="left:1786px"><span style="letter-spacing:-1px">v1</span></div><div class="cl" style="left:1866px;letter-spacing:0.85px">28.50 kB</div><div class="cl" style="left:2035px;letter-spacing:0.75px">20<span style="margin-left:-1.51px;margin-right:-2.69px">1</span>7–09–25 <span style="margin-left:-1.51px;margin-right:-2.69px">1</span>6:45</div></div>
<div class="row" style="top:1364px"><svg width="32" height="32" style="left:48px;top:45px"><rect width="32" height="32" rx="6" fill="#409eff"/><polyline points="6.3,14.8 12.3,20.8 23.8,9.2" fill="none" stroke="#fff" stroke-width="4.2"/></svg><svg width="64" height="72" style="left:110px;top:22px"><path d="M6,0 H42 L63.2,23 V66 Q63.2,72 57.2,72 H6 Q0,72 0,66 V6 Q0,0 6,0 Z" fill="#4086e4"/><path d="M42,0 L63.2,23 H49 Q42,23 42,16 Z" fill="#76aefc"/><path d="M47,22.4 H63.2" stroke="#3a4fb0" stroke-width="1" /><path d="M10.9,29.1 H18.2 L23.1,51.9 L28.8,29.1 H35.7 L41.3,51.9 L46,29.1 H51.9 L44.6,58.2 H37 L32.1,36.4 L26.4,58.2 H18.8 Z" fill="#fff"/></svg><div class="nm">WORD示例文件.<span>doc</span></div><div class="cl" style="left:1514px;letter-spacing:0px">曾大千</div><div class="cl" style="left:1786px"><span style="letter-spacing:-1px">v1</span></div><div class="cl" style="left:1866px;letter-spacing:0.85px">28.50 kB</div><div class="cl" style="left:2035px;letter-spacing:0.75px">20<span style="margin-left:-1.51px;margin-right:-2.69px">1</span>7–<span style="margin-left:-1.51px;margin-right:-2.69px">1</span>0–30 <span style="margin-left:-1.51px;margin-right:-2.69px">1</span>3:58</div></div>
<div class="row" style="top:1480px"><svg width="32" height="32" style="left:48px;top:45px"><rect width="32" height="32" rx="6" fill="#409eff"/><polyline points="6.3,14.8 12.3,20.8 23.8,9.2" fill="none" stroke="#fff" stroke-width="4.2"/></svg><svg width="64" height="72" style="left:110px;top:22px"><path d="M6,0 H42 L63.2,23 V66 Q63.2,72 57.2,72 H6 Q0,72 0,66 V6 Q0,0 6,0 Z" fill="#4086e4"/><path d="M42,0 L63.2,23 H49 Q42,23 42,16 Z" fill="#76aefc"/><path d="M47,22.4 H63.2" stroke="#3a4fb0" stroke-width="1" /><path d="M10.9,29.1 H18.2 L23.1,51.9 L28.8,29.1 H35.7 L41.3,51.9 L46,29.1 H51.9 L44.6,58.2 H37 L32.1,36.4 L26.4,58.2 H18.8 Z" fill="#fff"/></svg><div class="nm">WORD示例文件.<span>doc</span></div><div class="cl" style="left:1514px;letter-spacing:0px">曾大千</div><div class="cl" style="left:1786px"><span style="letter-spacing:-1px">v1</span></div><div class="cl" style="left:1866px;letter-spacing:0.85px">28.50 kB</div><div class="cl" style="left:2035px;letter-spacing:0.75px">20<span style="margin-left:-1.51px;margin-right:-2.69px">1</span>7–<span style="margin-left:-1.51px;margin-right:-2.69px">1</span><span style="margin-left:-1.51px;margin-right:-2.69px">1</span>–03 <span style="margin-left:-1.51px;margin-right:-2.69px">1</span>4:00</div></div>
<div class="row" style="top:1596px"><svg width="32" height="32" style="left:48px;top:45px"><rect width="32" height="32" rx="6" fill="#409eff"/><polyline points="6.3,14.8 12.3,20.8 23.8,9.2" fill="none" stroke="#fff" stroke-width="4.2"/></svg><svg width="64" height="72" style="left:110px;top:22px"><path d="M6,0 H42 L63.2,23 V66 Q63.2,72 57.2,72 H6 Q0,72 0,66 V6 Q0,0 6,0 Z" fill="#4086e4"/><path d="M42,0 L63.2,23 H49 Q42,23 42,16 Z" fill="#76aefc"/><path d="M47,22.4 H63.2" stroke="#3a4fb0" stroke-width="1" /><path d="M10.9,29.1 H18.2 L23.1,51.9 L28.8,29.1 H35.7 L41.3,51.9 L46,29.1 H51.9 L44.6,58.2 H37 L32.1,36.4 L26.4,58.2 H18.8 Z" fill="#fff"/></svg><div class="nm">WORD示例文件.<span>doc</span></div><div class="cl" style="left:1514px;letter-spacing:0px">曾大千</div><div class="cl" style="left:1786px"><span style="letter-spacing:-1px">v1</span></div><div class="cl" style="left:1866px;letter-spacing:0.85px">28.50 kB</div><div class="cl" style="left:2035px;letter-spacing:0.75px">20<span style="margin-left:-1.51px;margin-right:-2.69px">1</span>7–09–25 <span style="margin-left:-1.51px;margin-right:-2.69px">1</span>7:02</div></div>
<div class="row" style="top:1712px"><svg width="32" height="32" style="left:48px;top:45px"><rect width="32" height="32" rx="6" fill="#409eff"/><polyline points="6.3,14.8 12.3,20.8 23.8,9.2" fill="none" stroke="#fff" stroke-width="4.2"/></svg><svg width="64" height="72" style="left:110px;top:22px"><path d="M6,0 H42 L63.2,23 V66 Q63.2,72 57.2,72 H6 Q0,72 0,66 V6 Q0,0 6,0 Z" fill="#4086e4"/><path d="M42,0 L63.2,23 H49 Q42,23 42,16 Z" fill="#76aefc"/><path d="M47,22.4 H63.2" stroke="#3a4fb0" stroke-width="1" /><path d="M10.9,29.1 H18.2 L23.1,51.9 L28.8,29.1 H35.7 L41.3,51.9 L46,29.1 H51.9 L44.6,58.2 H37 L32.1,36.4 L26.4,58.2 H18.8 Z" fill="#fff"/></svg><div class="nm">附件1–2.<span>doc</span></div><div class="cl" style="left:1514px;letter-spacing:0.45px">sunjie2007@foxmai...</div><div class="cl" style="left:1786px"><span style="letter-spacing:-1px">v1</span></div><div class="cl" style="left:1866px;letter-spacing:0.85px"><span style="margin-left:-1.44px;margin-right:-2.56px">1</span>59.50 kB</div><div class="cl" style="left:2035px;letter-spacing:0.75px">20<span style="margin-left:-1.51px;margin-right:-2.69px">1</span>8–<span style="margin-left:-1.51px;margin-right:-2.69px">1</span><span style="margin-left:-1.51px;margin-right:-2.69px">1</span>–09 <span style="margin-left:-1.51px;margin-right:-2.69px">1</span>6:<span style="margin-left:-1.51px;margin-right:-2.69px">1</span>6</div></div>
<div class="a" style="left:2818px;top:437px;width:12px;height:843px;border-radius:6px;background:#dddddd"></div>
<div class="a" style="left:1506.5px;top:312px;width:237px;height:597px;background:#fff;border:2px solid #e6e9ef;box-shadow:0 4px 24px rgba(0,0,0,0.10)"></div>
<div class="a" style="left:1509px;top:480px;width:232px;height:52px;background:#e8f5ff"></div>
<div class="a" style="left:1509px;top:844px;width:232px;height:2px;background:#f2f3f6"></div>
<div class="di" style="left:1522px;top:338px">添加标签</div>
<div class="di" style="left:1522px;top:390px">收藏</div>
<div class="di" style="left:1522px;top:442px">订阅</div>
<div class="di" style="left:1522px;top:494px">删除</div>
<div class="di" style="left:1522px;top:546px">发私信</div>
<div class="di ds" style="left:1522px;top:598px">复制到</div>
<div class="di" style="left:1522px;top:650px">移动到</div>
<div class="di ds" style="left:1522px;top:702px">上传新版本</div>
<div class="di ds" style="left:1522px;top:754px">权限设置</div>
<div class="di ds" style="left:1530px;top:806px">导出目录</div>
<div class="di" style="left:1522px;top:859px;color:#d3d7c9">在新标签页中打开</div>
</body></html>
